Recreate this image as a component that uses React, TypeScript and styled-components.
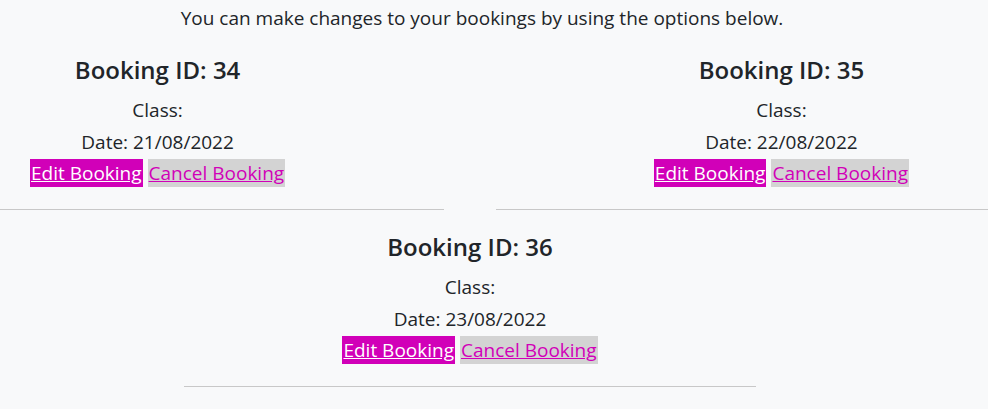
import styled, { createGlobalStyle } from 'styled-components';

const GlobalStyle = createGlobalStyle`
  body {
    margin: 0;
    background: #f8f9fa;
    color: #212529;
    font-family: "Open Sans", "Noto Sans", sans-serif;
    font-size: 19px;
  }
`;

const Page = styled('div')`
  display: flex;
  flex-direction: column;
`;

const Intro = styled('p')`
  margin: 6px 0 0;
  padding-right: 24px;
  text-align: center;
  line-height: 24px;
`;

const Row = styled('div')`
  display: flex;
  justify-content: space-between;
  padding: 0 79px 0 30px;
  margin-top: 25px;
`;

const Card = styled('div')`
  display: flex;
  flex-direction: column;
  align-items: center;
`;

const Title = styled('h4')`
  margin: 0 0 12px;
  font-size: 24px;
  font-weight: 600;
  line-height: 30px;
`;

const Detail = styled('p')`
  margin: 0 0 6px;
  line-height: 26px;
`;

const Actions = styled('div')`
  display: flex;
  gap: 5px;
  margin-top: -2px;
`;

const ActionLink = styled('a')<{ $primary?: boolean }>`
  display: block;
  padding: 0 1px;
  line-height: 28px;
  color: ${(p) => (p.$primary ? '#ffffff' : '#d100b8')};
  background: ${(p) => (p.$primary ? '#d100b8' : '#d3d3d3')};
  text-decoration: underline;
  cursor: pointer;
`;

const DividerRow = styled('div')`
  display: flex;
  gap: 52px;
  margin-top: 22px;
`;

const Line = styled('hr')<{ $width?: number }>`
  margin: 0;
  border: 0;
  border-top: 1px solid #c8c8c8;
  flex: ${(p) => (p.$width ? `0 0 ${p.$width}px` : '1')};
`;

const Bottom = styled('div')`
  display: flex;
  flex-direction: column;
  align-items: center;
  width: 572px;
  margin: 22px 0 0 184px;
`;

const BottomLine = styled(Line)`
  align-self: stretch;
  margin-top: 22px;
`;

type Booking = { id: number; date: string };

const BookingCard = ({ id, date }: Booking) => (
  <Card>
    <Title>Booking ID: {id}</Title>
    <Detail>Class:</Detail>
    <Detail>Date: {date}</Detail>
    <Actions>
      <ActionLink $primary>Edit Booking</ActionLink>
      <ActionLink>Cancel Booking</ActionLink>
    </Actions>
  </Card>
);

const App = () => (
  <Page>
    <GlobalStyle />
    <Intro>You can make changes to your bookings by using the options below.</Intro>
    <Row>
      <BookingCard id={34} date="21/08/2022" />
      <BookingCard id={35} date="22/08/2022" />
    </Row>
    <DividerRow>
      <Line $width={444} />
      <Line />
    </DividerRow>
    <Bottom>
      <BookingCard id={36} date="23/08/2022" />
      <BottomLine />
    </Bottom>
  </Page>
);

export default App;
